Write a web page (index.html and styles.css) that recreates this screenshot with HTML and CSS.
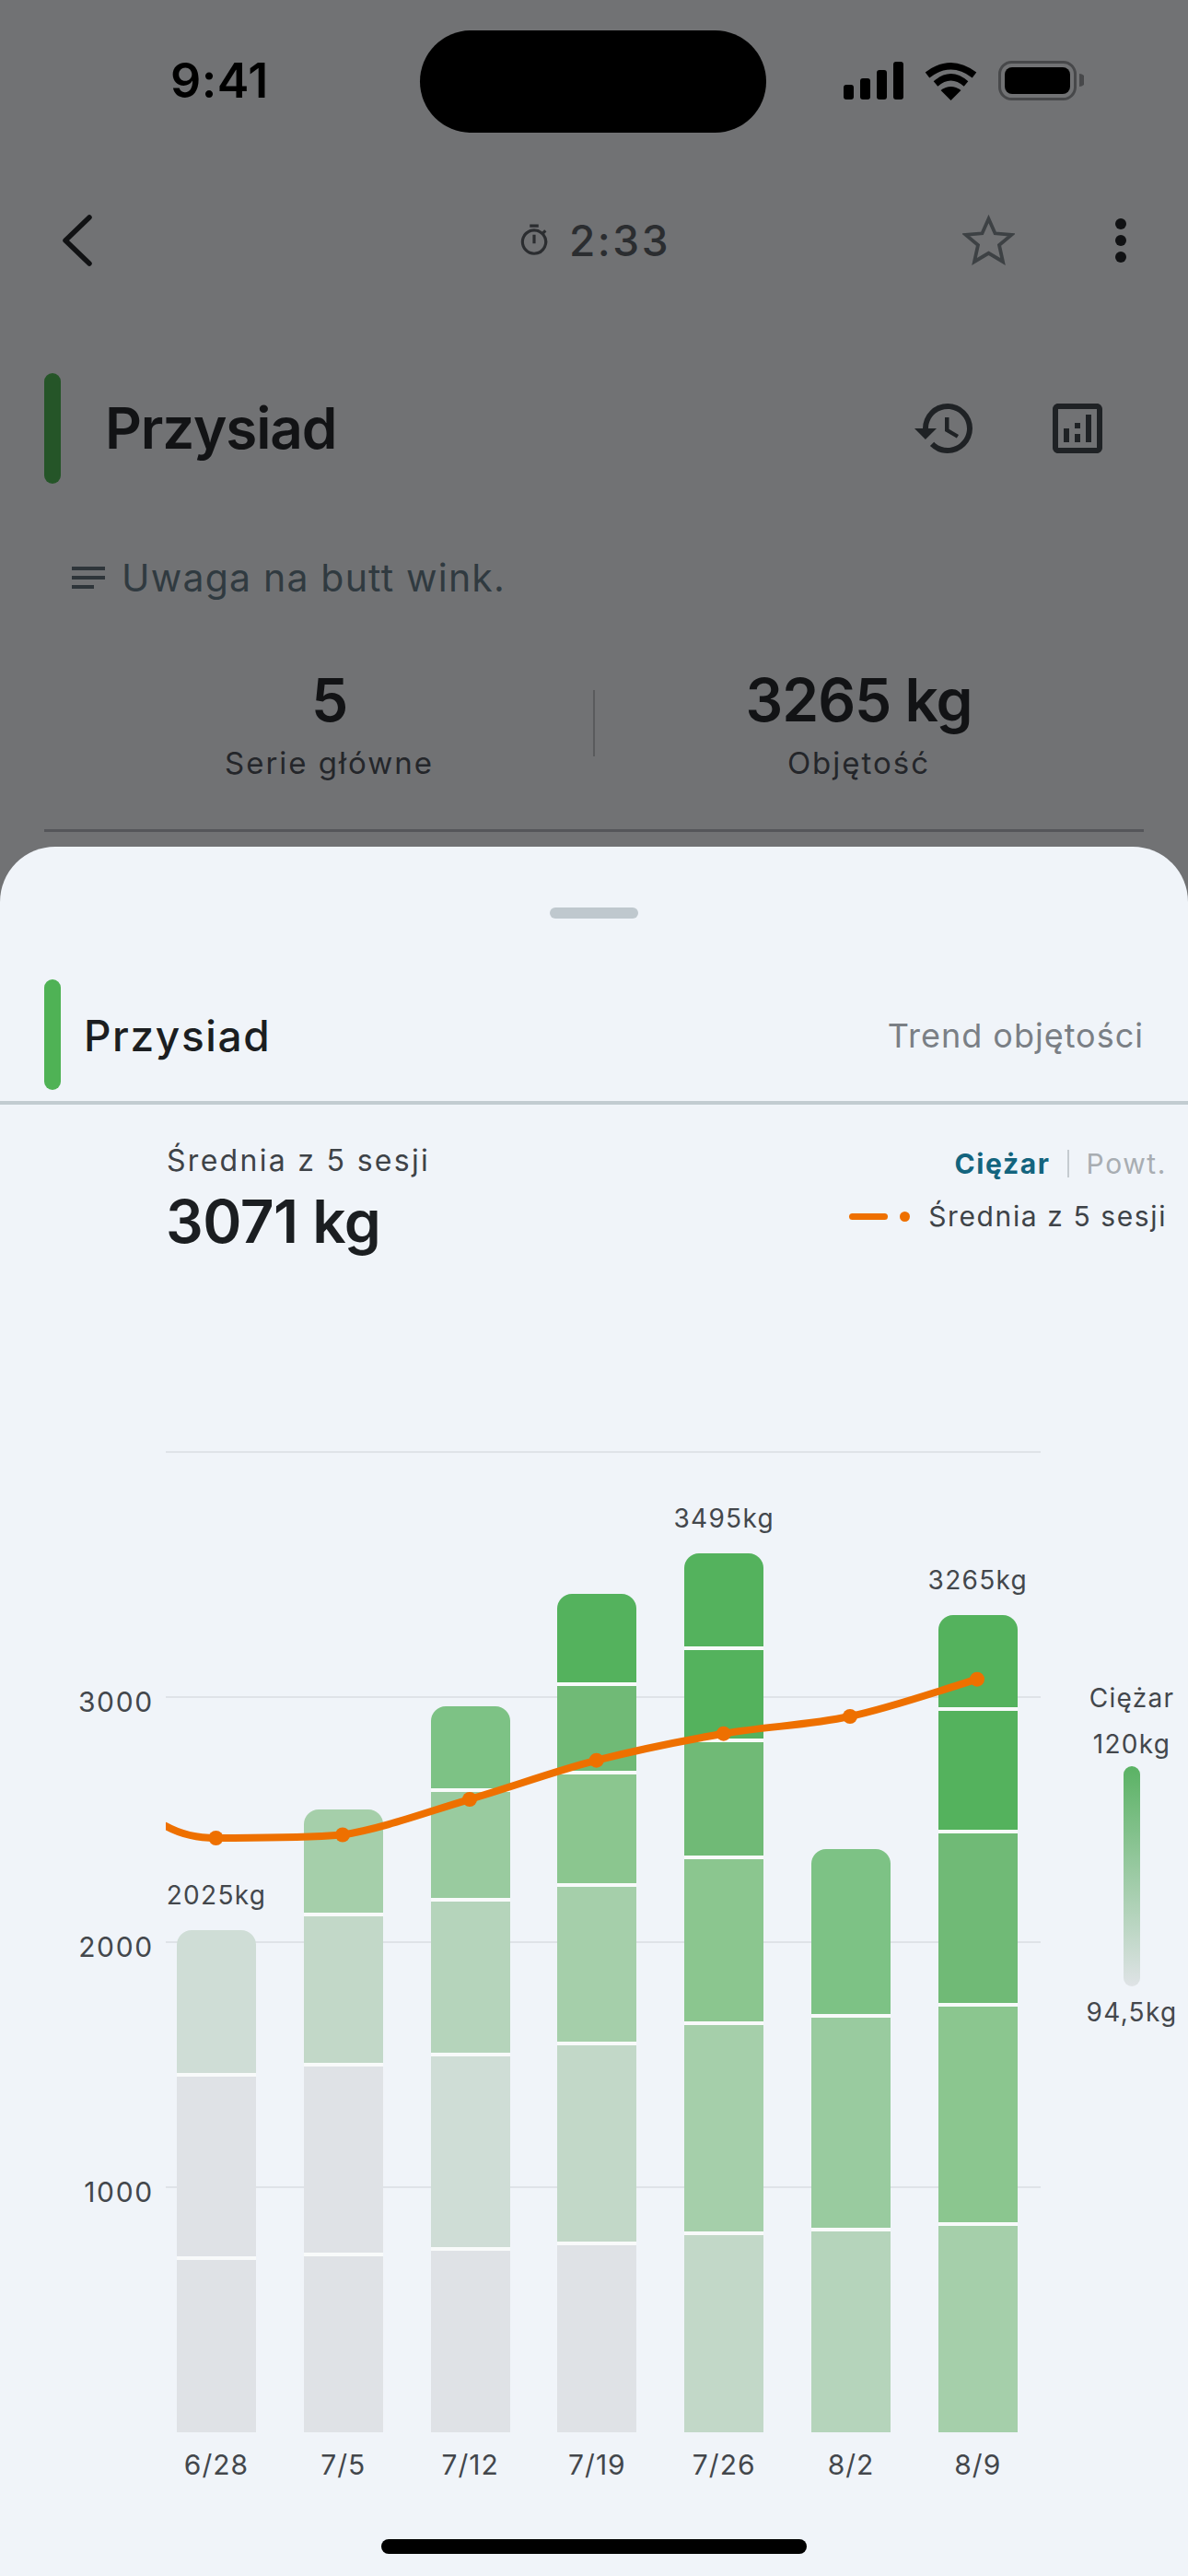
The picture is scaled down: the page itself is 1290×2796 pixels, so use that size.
FILE: index.html
```html
<!DOCTYPE html>
<html lang="pl">
<head>
    <meta charset="UTF-8">
    <meta name="viewport" content="width=device-width, initial-scale=1.0">
    <title>Przysiad</title>
    <link rel="stylesheet" href="styles.css">
</head>
<body>
    <div class="screen">
        <div class="status">
            <div class="status-left"><span class="clock">9:41</span></div>
            <div class="island"></div>
            <div class="status-right">
                <svg width="65" height="41" viewBox="0 0 65 41"><rect x="0" y="25" width="11" height="16" rx="3"/><rect x="18" y="18" width="11" height="23" rx="3"/><rect x="36" y="9" width="11" height="32" rx="3"/><rect x="54" y="0" width="11" height="41" rx="3"/></svg>
                <svg width="57" height="42" viewBox="0 0 57 42"><path d="M3 14.500Q28.500-5 54 14.500" fill="none" stroke="#000" stroke-width="7.500"/><path d="M12 24Q28.500 9.500 45 24" fill="none" stroke="#000" stroke-width="7"/><path d="M28.500 42L17.500 31Q28.500 23 39.500 31Z"/></svg>
                <svg width="93" height="43" viewBox="0 0 93 43"><rect x="1.500" y="1.500" width="82" height="40" rx="13" fill="none" stroke="#47484a" stroke-width="3"/><rect x="7" y="7" width="71" height="29" rx="8"/><path d="M88 14a7 7 0 0 1 0 14z" fill="#47484a"/></svg>
            </div>
        </div>

        <div class="nav">
            <svg class="back" width="33" height="56" viewBox="0 0 33 56"><path d="M30 3L4 28L30 53" fill="none" stroke="#111214" stroke-width="5.500" stroke-linecap="round" stroke-linejoin="round"/></svg>
            <div class="timer">
                <svg width="48" height="48" viewBox="0 0 24 24" fill="#2b2d30"><path d="M15 1H9v2h6V1zm-4 13h2V8h-2v6zm8.030-6.610 1.420-1.420c-.43-.51-.9-.99-1.410-1.410l-1.420 1.420A8.962 8.962 0 0 0 12 4c-4.970 0-9 4.030-9 9s4.020 9 9 9a8.994 8.994 0 0 0 7.030-14.610zM12 20c-3.870 0-7-3.130-7-7s3.130-7 7-7 7 3.130 7 7-3.130 7-7 7z"/></svg>
                <span>2:33</span>
            </div>
            <svg class="star" width="57" height="55" viewBox="0 0 57 55"><path d="M28.500 4.500L35.500 20.300L53.500 21.800L40 33L44 51L28.500 41.800L13 51L17 33L3.500 21.800L21.500 20.300Z" fill="none" stroke="#3d4144" stroke-width="3.800"/></svg>
            <div class="dots"><i></i><i></i><i></i></div>
        </div>

        <div class="title-row">
            <div class="accent accent-dim"></div>
            <h1>Przysiad</h1>
            <svg class="history" width="72" height="72" viewBox="0 0 24 24" fill="#1f2225"><path d="M13 3a9 9 0 0 0-9 9H1l3.890 3.890.07.14L9 12H6c0-3.870 3.130-7 7-7s7 3.130 7 7-3.130 7-7 7c-1.930 0-3.680-.79-4.940-2.060l-1.420 1.420A8.954 8.954 0 0 0 13 21a9 9 0 0 0 0-18zm-1 5v5l4.280 2.540.72-1.210-3.500-2.080V8H12z"/></svg>
            <svg width="72" height="72" viewBox="0 0 24 24" fill="#1f2225"><path d="M19 3H5c-1.100 0-2 .9-2 2v14c0 1.100.9 2 2 2h14c1.100 0 2-.9 2-2V5c0-1.100-.9-2-2-2zm0 16H5V5h14v14zM7 12h2v5H7zm8-5h2v10h-2zm-4 7h2v3h-2zm0-4h2v2h-2z"/></svg>
        </div>

        <div class="note">
            <svg width="48" height="48" viewBox="0 0 24 24" fill="#2e353a"><path d="M3 18h12v-2H3v2zM3 6v2h18V6H3zm0 7h18v-2H3v2z"/></svg>
            <span>Uwaga na butt wink.</span>
        </div>

        <div class="stats">
            <div class="stat">
                <div class="stat-value">5</div>
                <div class="stat-label">Serie główne</div>
            </div>
            <div class="stat-sep"></div>
            <div class="stat">
                <div class="stat-value">3265 kg</div>
                <div class="stat-label">Objętość</div>
            </div>
        </div>
        <div class="stats-line"></div>

        <div class="sheet">
            <div class="handle"></div>
            <div class="sheet-header">
                <div class="accent"></div>
                <h2>Przysiad</h2>
                <span class="sheet-sub">Trend objętości</span>
            </div>
            <div class="sheet-line"></div>

            <div class="chart-head">
                <div class="avg">
                    <div class="avg-label">Średnia z 5 sesji</div>
                    <div class="avg-value">3071 kg</div>
                </div>
                <div class="controls">
                    <div class="toggle">
                        <span class="toggle-on">Ciężar</span>
                        <span class="toggle-sep"></span>
                        <span class="toggle-off">Powt.</span>
                    </div>
                    <div class="line-key">
                        <span class="key-dash"></span>
                        <span class="key-dot"></span>
                        <span class="key-text">Średnia z 5 sesji</span>
                    </div>
                </div>
            </div>

            <div class="chart">
                <div class="y-axis">
                    <div class="y-tick">3000</div>
                    <div class="y-tick">2000</div>
                    <div class="y-tick">1000</div>
                </div>

                <div class="plot-wrap">
                    <div class="plot">
                        <div class="grid"><div></div><div></div><div></div><div></div></div>
                        <div class="bars">
                            <div class="col">
                                <span class="bar-total">2025kg</span>
                                <div class="bar">
                                    <div class="seg tone-6" style="height:159px"></div>
                                    <div class="seg tone-7" style="height:199px"></div>
                                    <div class="seg tone-7" style="height:187px"></div>
                                </div>
                            </div>
                            <div class="col">
                                <div class="bar">
                                    <div class="seg tone-4" style="height:116px"></div>
                                    <div class="seg tone-5" style="height:163px"></div>
                                    <div class="seg tone-7" style="height:206px"></div>
                                    <div class="seg tone-7" style="height:191px"></div>
                                </div>
                            </div>
                            <div class="col">
                                <div class="bar">
                                    <div class="seg tone-a" style="height:93px"></div>
                                    <div class="seg tone-b" style="height:119px"></div>
                                    <div class="seg tone-c" style="height:168px"></div>
                                    <div class="seg tone-6" style="height:211px"></div>
                                    <div class="seg tone-7" style="height:197px"></div>
                                </div>
                            </div>
                            <div class="col">
                                <div class="bar">
                                    <div class="seg tone-1" style="height:100px"></div>
                                    <div class="seg tone-2" style="height:96px"></div>
                                    <div class="seg tone-3" style="height:122px"></div>
                                    <div class="seg tone-4" style="height:172px"></div>
                                    <div class="seg tone-5" style="height:217px"></div>
                                    <div class="seg tone-7" style="height:203px"></div>
                                </div>
                            </div>
                            <div class="col">
                                <span class="bar-total">3495kg</span>
                                <div class="bar">
                                    <div class="seg tone-1" style="height:105px"></div>
                                    <div class="seg tone-1" style="height:100px"></div>
                                    <div class="seg tone-2" style="height:127px"></div>
                                    <div class="seg tone-3" style="height:180px"></div>
                                    <div class="seg tone-4" style="height:228px"></div>
                                    <div class="seg tone-5" style="height:214px"></div>
                                </div>
                            </div>
                            <div class="col">
                                <div class="bar">
                                    <div class="seg tone-a" style="height:183px"></div>
                                    <div class="seg tone-b" style="height:232px"></div>
                                    <div class="seg tone-c" style="height:218px"></div>
                                </div>
                            </div>
                            <div class="col">
                                <span class="bar-total">3265kg</span>
                                <div class="bar">
                                    <div class="seg tone-1" style="height:104px"></div>
                                    <div class="seg tone-1" style="height:133px"></div>
                                    <div class="seg tone-2" style="height:188px"></div>
                                    <div class="seg tone-3" style="height:238px"></div>
                                    <div class="seg tone-4" style="height:224px"></div>
                                </div>
                            </div>
                        </div>
                        <svg class="trend" width="950" height="1065" viewBox="0 0 950 1065">
                            <path d="M0 407C18 417 36 420 54.500 420C100 420 146 420 192 416.500C238 409 284 391.500 330 378C376 364.500 422 347.600 467.700 335.700C513.700 323.800 559.700 314.700 605.700 306.700C651.700 298.700 697 297.800 743 288C789 278.200 835 261.500 881 247.700" fill="none" stroke="#ee7000" stroke-width="8" stroke-linecap="round"/>
                            <g fill="#ee7000">
                                <circle cx="54.500" cy="420" r="8"/>
                                <circle cx="192" cy="416.500" r="8"/>
                                <circle cx="330" cy="378" r="8"/>
                                <circle cx="467.700" cy="335.700" r="8"/>
                                <circle cx="605.700" cy="306.700" r="8"/>
                                <circle cx="743" cy="288" r="8"/>
                                <circle cx="881" cy="247.700" r="8"/>
                            </g>
                        </svg>
                    </div>
                    <div class="x-axis">
                        <span>6/28</span><span>7/5</span><span>7/12</span><span>7/19</span><span>7/26</span><span>8/2</span><span>8/9</span>
                    </div>
                </div>

                <div class="scale">
                    <div class="scale-title">Ciężar</div>
                    <div class="scale-max">120kg</div>
                    <div class="scale-bar"></div>
                    <div class="scale-min">94,5kg</div>
                </div>
            </div>

            <div class="home-bar"></div>
        </div>
    </div>
</body>
</html>
```

FILE: styles.css
```css
* {
    margin: 0;
    padding: 0;
    box-sizing: border-box;
}

body {
    font-family: 'Inter', 'Liberation Sans', sans-serif;
    background: #717274;
}

.screen {
    width: 1290px;
    height: 2796px;
    display: flex;
    flex-direction: column;
    background: #717274;
    overflow: hidden;
}

/* status bar */
.status {
    height: 177px;
    display: flex;
    align-items: center;
}

.status-left {
    width: 456px;
    margin-top: -2px;
    padding-left: 185px;
}

.clock {
    font-size: 52px;
    line-height: 60px;
    font-weight: 600;
    color: #000;
    letter-spacing: 0.5px;
}

.island {
    width: 376px;
    height: 111px;
    border-radius: 56px;
    background: #000;
}

.status-right {
    display: flex;
    align-items: center;
    gap: 23px;
    padding-left: 84px;
    margin-top: -2px;
}

/* nav */
.nav {
    height: 168px;
    display: flex;
    align-items: center;
    padding-left: 67px;
}

.timer {
    display: flex;
    align-items: center;
    gap: 19px;
    margin-left: 461px;
    font-size: 46px;
    line-height: 56px;
    font-weight: 500;
    color: #2b2d30;
    letter-spacing: 2.500px;
    width: 167px;
}

.star {
    margin: -2px 0 0 317px;
}

.dots {
    display: flex;
    flex-direction: column;
    gap: 6px;
    margin-left: 109px;
}

.dots i {
    width: 12px;
    height: 12px;
    border-radius: 50%;
    background: #111214;
}

/* title */
.title-row {
    height: 120px;
    margin-top: 60px;
    display: flex;
    align-items: center;
    padding: 0 84px 0 48px;
}

.accent {
    width: 18px;
    height: 120px;
    border-radius: 9px;
    background: #4fb255;
}

.accent-dim {
    background: #255528;
}

h1 {
    margin-left: 48px;
    font-size: 62px;
    line-height: 76px;
    font-weight: 600;
    color: #121315;
    letter-spacing: -1.200px;
}

.history {
    margin-left: auto;
    margin-right: 72px;
}

.note {
    margin-top: 78px;
    padding-left: 72px;
    display: flex;
    align-items: center;
    gap: 12px;
    font-size: 41px;
    line-height: 48px;
    color: #303a40;
    letter-spacing: 1.200px;
}

/* stats */
.stats {
    margin-top: 69px;
    padding: 0 71px;
    display: flex;
    align-items: center;
}

.stat {
    flex: 1;
    text-align: center;
}

.stat-value {
    font-size: 64px;
    line-height: 80px;
    font-weight: 600;
    color: #121315;
    letter-spacing: -1px;
    margin-bottom: 6px;
}

.stat-label {
    font-size: 33px;
    line-height: 44px;
    color: #24262a;
    letter-spacing: 2px;
}

.stat-sep {
    width: 2px;
    height: 72px;
    background: #5a5b5d;
}

.stats-line {
    height: 3px;
    margin: 50px 48px 0;
    background: #55565a;
}

/* sheet */
.sheet {
    flex: 1;
    margin-top: 16px;
    border-radius: 60px 60px 0 0;
    background: #f0f4f9;
    display: flex;
    flex-direction: column;
}

.handle {
    width: 96px;
    height: 12px;
    margin: 66px auto 0;
    border-radius: 6px;
    background: #bfc8ce;
}

.sheet-header {
    height: 120px;
    margin-top: 66px;
    padding: 0 48px;
    display: flex;
    align-items: center;
}

h2 {
    margin: 2px 0 0 25px;
    font-size: 46px;
    line-height: 60px;
    font-weight: 500;
    color: #1b1e21;
    letter-spacing: 1.600px;
}

.sheet-sub {
    margin: 2px 0 0 auto;
    font-size: 36px;
    line-height: 48px;
    color: #7a7f85;
    letter-spacing: 1px;
}

.sheet-line {
    height: 4px;
    margin-top: 12px;
    background: #c2ccd1;
}

/* chart header */
.chart-head {
    height: 376px;
    display: flex;
    justify-content: space-between;
    padding: 39px 23px 0 180px;
}

.avg-label {
    margin-left: 1px;
    font-size: 32px;
    line-height: 44px;
    color: #3e4348;
    letter-spacing: 2.300px;
}

.avg-value {
    margin-top: 4px;
    font-size: 64px;
    line-height: 80px;
    font-weight: 600;
    color: #1b1e21;
    letter-spacing: -0.500px;
}

.controls {
    padding-top: 3px;
    display: flex;
    flex-direction: column;
    align-items: flex-end;
    gap: 13px;
}

.toggle {
    display: flex;
    align-items: center;
    height: 44px;
    font-size: 30px;
    line-height: 44px;
}

.toggle-on {
    font-weight: 700;
    color: #13647e;
    letter-spacing: 1.600px;
}

.toggle-sep {
    width: 2px;
    height: 30px;
    margin: 0 19px 0 18px;
    background: #c5cbd0;
}

.toggle-off {
    color: #a8adb2;
    letter-spacing: 1.600px;
}

.line-key {
    display: flex;
    align-items: center;
    height: 44px;
    font-size: 30px;
    line-height: 44px;
    color: #3e4348;
    letter-spacing: 1.600px;
}

.key-dash {
    width: 42px;
    height: 7px;
    border-radius: 4px;
    background: #ee7000;
}

.key-dot {
    width: 11px;
    height: 11px;
    margin: 0 20px 0 13px;
    border-radius: 50%;
    background: #ee7000;
}

/* chart */
.chart {
    display: flex;
    align-items: flex-start;
}

.y-axis {
    width: 180px;
    padding: 250px 13px 0 0;
    text-align: right;
    font-size: 30px;
    line-height: 44px;
    color: #43474c;
    letter-spacing: 1.700px;
}

.y-tick {
    height: 266px;
}

.plot-wrap {
    width: 950px;
}

.plot {
    position: relative;
    height: 1065px;
}

.grid {
    position: absolute;
    inset: 0;
    display: flex;
    flex-direction: column;
}

.grid div {
    height: 266px;
    border-top: 2px solid #dfe3e8;
}

.bars {
    position: relative;
    height: 100%;
    padding-left: 12px;
    display: flex;
    align-items: flex-end;
    gap: 51.800px;
}

.col {
    width: 86px;
    display: flex;
    flex-direction: column;
    align-items: center;
}

.bar {
    width: 86px;
    border-radius: 16px 16px 0 0;
    overflow: hidden;
}

.seg {
    border-bottom: 4px solid #f8fafa;
}

.seg:last-child {
    border-bottom: none;
}

.bar-total {
    margin-bottom: 18px;
    font-size: 28px;
    line-height: 40px;
    color: #43474c;
    letter-spacing: 1.300px;
    white-space: nowrap;
}

.tone-1 { background: #54b25d; }
.tone-2 { background: #70ba76; }
.tone-3 { background: #8bc68f; }
.tone-4 { background: #a5cfaa; }
.tone-5 { background: #c2d8c8; }
.tone-6 { background: #cfddd6; }
.tone-7 { background: #dfe2e6; }
.tone-a { background: #7dc285; }
.tone-b { background: #99cb9f; }
.tone-c { background: #b5d4bb; }

.trend {
    position: absolute;
    left: 0;
    top: 0;
}

.x-axis {
    margin-top: 13px;
    padding-left: 12px;
    display: flex;
    gap: 51.800px;
    font-size: 30px;
    line-height: 44px;
    color: #43474c;
    letter-spacing: 1px;
}

.x-axis span {
    width: 86px;
    text-align: center;
    white-space: nowrap;
}

/* colour scale */
.scale {
    width: 160px;
    margin-top: 248px;
    padding-left: 38px;
    display: flex;
    flex-direction: column;
    align-items: center;
    font-size: 28px;
    line-height: 40px;
    color: #43474c;
    letter-spacing: 1.300px;
    white-space: nowrap;
}

.scale-max {
    margin-top: 10px;
}

.scale-bar {
    width: 18px;
    height: 239px;
    margin: 4px 0 8px;
    border-radius: 9px;
    background: linear-gradient(180deg, #5ab264, #dfe3e6);
}

.home-bar {
    width: 462px;
    height: 16px;
    margin: 59px auto 0;
    border-radius: 8px;
    background: #000;
}
```
